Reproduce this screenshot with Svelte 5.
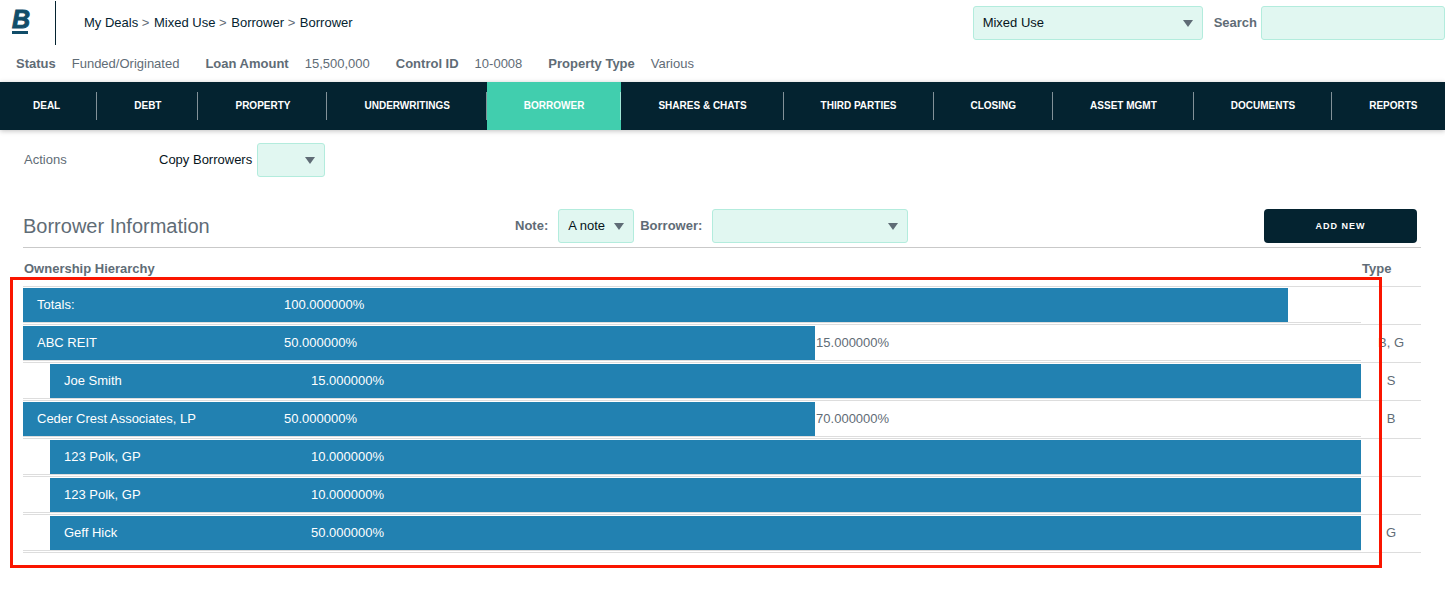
<script>
  const crumbs = ["My Deals", "Mixed Use", "Borrower", "Borrower"];

  const facts = [
    ["Status", "Funded/Originated"],
    ["Loan Amount", "15,500,000"],
    ["Control ID", "10-0008"],
    ["Property Type", "Various"],
  ];

  const tabs = [
    "Deal",
    "Debt",
    "Property",
    "Underwritings",
    "Borrower",
    "Shares & Chats",
    "Third Parties",
    "Closing",
    "Asset Mgmt",
    "Documents",
    "Reports",
  ];
  let active = $state("Borrower");

  const rows = [
    { name: "Totals:", share: "100.000000%", fill: 94.54 },
    { name: "ABC REIT", share: "50.000000%", fill: 59.2, rest: "15.000000%", type: "B, G" },
    { name: "Joe Smith", share: "15.000000%", fill: 100, child: true, type: "S" },
    { name: "Ceder Crest Associates, LP", share: "50.000000%", fill: 59.2, rest: "70.000000%", type: "B" },
    { name: "123 Polk, GP", share: "10.000000%", fill: 100, child: true },
    { name: "123 Polk, GP", share: "10.000000%", fill: 100, child: true },
    { name: "Geff Hick", share: "50.000000%", fill: 100, child: true, type: "G" },
  ];
</script>

<div class="page">
  <header class="top">
    <a class="logo" href="#home"><span>B</span></a>
    <nav class="crumbs">
      {#each crumbs as crumb, i}
        {#if i > 0}<span>&nbsp;&gt;&nbsp;</span>{/if}<a href="#crumb-{i}">{crumb}</a>
      {/each}
    </nav>
    <div class="select deal-select">
      <select aria-label="Deal">
        <option>Mixed Use</option>
      </select>
    </div>
    <label class="search-label" for="search">Search</label>
    <input id="search" class="search" type="text" />
  </header>

  <dl class="facts">
    {#each facts as [label, value]}
      <div>
        <dt>{label}</dt>
        <dd>{value}</dd>
      </div>
    {/each}
  </dl>

  <nav class="tabs">
    {#each tabs as tab}
      <button class:active={active === tab} onclick={() => (active = tab)}>{tab}</button>
    {/each}
  </nav>

  <main>
    <div class="actions">
      <span class="actions-title">Actions</span>
      <label for="copy">Copy Borrowers</label>
      <div class="select copy-select">
        <select id="copy">
          <option></option>
        </select>
      </div>
    </div>

    <div class="section-head">
      <h2>Borrower Information</h2>
      <label for="note">Note:</label>
      <div class="select note-select">
        <select id="note">
          <option>A note</option>
        </select>
      </div>
      <label for="borrower">Borrower:</label>
      <div class="select borrower-select">
        <select id="borrower">
          <option></option>
        </select>
      </div>
      <button class="add">Add New</button>
    </div>

    <div class="hierarchy">
      <table>
        <thead>
          <tr>
            <th>Ownership Hierarchy</th>
            <th class="type">Type</th>
          </tr>
        </thead>
        <tbody>
          {#each rows as row}
            <tr>
              <td>
                <div class="track" class:child={row.child}>
                  <div class="bar" style="width: {row.fill}%">
                    <span class="name">{row.name}</span>
                    <span>{row.share}</span>
                  </div>
                  {#if row.rest}
                    <span class="rest">{row.rest}</span>
                  {/if}
                </div>
              </td>
              <td class="type">{row.type || ""}</td>
            </tr>
          {/each}
        </tbody>
      </table>
      <div class="highlight"></div>
    </div>
  </main>
</div>

<style>
  :global(body) {
    background: #fff;
  }
  .page {
    overflow: hidden;
    padding-bottom: 40px;
    color: #5f6c76;
    font-family: "Helvetica Neue", Helvetica, "Liberation Sans", Arial, sans-serif;
    font-size: 13px;
    line-height: 18px;
  }
  .page * {
    box-sizing: border-box;
  }
  a {
    color: #042330;
    text-decoration: none;
  }
  button,
  input,
  select {
    font: inherit;
  }

  .top {
    display: flex;
    align-items: center;
    height: 46px;
  }
  .logo {
    align-self: stretch;
    width: 56px;
    margin: 1px 28px 1px 0;
    padding: 6px 0 0 12px;
    border-right: 1px solid #042330;
  }
  .logo span {
    display: block;
    width: 16px;
    height: 27px;
    border-bottom: 3px solid #114d69;
    color: #114d69;
    font: italic bold 25px/25px "Liberation Sans", Arial, sans-serif;
    -webkit-text-stroke: 1px #114d69;
  }
  .crumbs {
    display: flex;
    flex: 1;
  }
  .crumbs span {
    margin-right: 1px;
  }
  .select {
    position: relative;
  }
  .select::after {
    content: "";
    position: absolute;
    top: 14px;
    right: 10px;
    border: 5px solid transparent;
    border-top: 7px solid #5f6c76;
    border-bottom: 0;
    pointer-events: none;
  }
  select,
  .search {
    display: block;
    width: 100%;
    height: 34px;
    padding: 0 9px;
    appearance: none;
    border: 1px solid #b3ecdd;
    border-radius: 3px;
    background: #e1f7f1;
    color: #06141b;
  }
  .deal-select {
    width: 230px;
  }
  .search-label {
    margin: 0 4px 0 11px;
    font-weight: bold;
  }
  .search {
    width: 184px;
  }

  .facts {
    display: flex;
    gap: 26px;
    margin: 0;
    padding: 9px 16px;
  }
  .facts div {
    display: flex;
    gap: 16px;
  }
  dt {
    font-weight: bold;
  }
  dd {
    margin: 0;
  }

  .tabs {
    display: flex;
    height: 48px;
    background: #042330;
    box-shadow: 0 1px 5px rgba(0, 0, 0, 0.25);
  }
  .tabs button {
    position: relative;
    flex: none;
    padding: 0 37px;
    border: 0;
    background: none;
    color: #fff;
    font-size: 10px;
    font-weight: bold;
    text-transform: uppercase;
    white-space: nowrap;
    cursor: pointer;
  }
  .tabs button:first-child {
    padding-left: 33px;
  }
  .tabs button::after {
    content: "";
    position: absolute;
    top: 10px;
    right: 0;
    width: 1px;
    height: 28px;
    background: rgba(255, 255, 255, 0.5);
  }
  .tabs button:last-child {
    padding-right: 0;
  }
  .tabs button:last-child::after {
    display: none;
  }
  .tabs .active {
    background: #41ceae;
  }

  main {
    padding: 13px 24px 0 23px;
  }
  .actions {
    display: flex;
    align-items: center;
    color: #06141b;
  }
  .actions-title {
    width: 136px;
    padding-left: 1px;
    color: #5f6c76;
  }
  .copy-select {
    width: 68px;
    margin-left: 5px;
  }

  .section-head {
    display: flex;
    align-items: center;
    margin-top: 32px;
    padding: 0 4px 4px 0;
    border-bottom: 1px solid #c9c9c9;
    font-weight: bold;
  }
  h2 {
    width: 492px;
    margin: 0;
    font-size: 20px;
    font-weight: normal;
    line-height: 24px;
  }
  .note-select {
    width: 76px;
    margin: 0 6px 0 10px;
    font-weight: normal;
  }
  .borrower-select {
    width: 196px;
    margin-left: 10px;
  }
  .add {
    width: 153px;
    height: 34px;
    margin-left: auto;
    border: 0;
    border-radius: 4px;
    background: #042330;
    color: #fff;
    font-size: 9px;
    font-weight: bold;
    letter-spacing: 1px;
    text-transform: uppercase;
    cursor: pointer;
  }

  .hierarchy {
    position: relative;
  }
  table {
    width: 100%;
    border-spacing: 0;
    table-layout: fixed;
  }
  th {
    height: 39px;
    padding: 4px 1px 0;
    border-bottom: 1px solid #ddd;
    text-align: left;
  }
  td {
    padding: 1px 0;
    border-bottom: 1px solid #ddd;
  }
  .type {
    width: 60px;
  }
  td.type {
    padding-bottom: 3px;
    text-align: center;
  }
  .track {
    display: flex;
    align-items: center;
    border-bottom: 1px solid #ddd;
  }
  .child {
    padding-left: 27px;
  }
  .bar {
    display: flex;
    flex: none;
    align-items: center;
    height: 34px;
    padding-left: 14px;
    background: #2281b1;
    color: #fff;
  }
  .name {
    width: 247px;
  }
  .rest {
    padding-left: 1px;
  }
  /* callout frame over the ownership bars */
  .highlight {
    position: absolute;
    top: 29px;
    right: 39px;
    bottom: -15px;
    left: -13px;
    border: 3px solid #fa1500;
    pointer-events: none;
  }
</style>
